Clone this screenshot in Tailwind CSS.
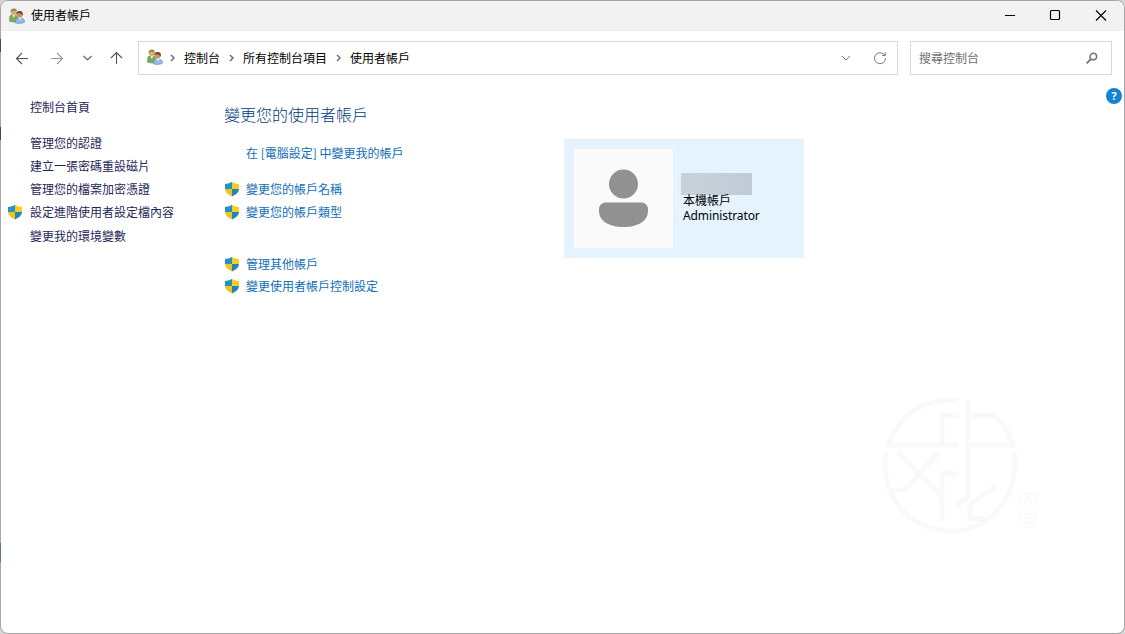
<!DOCTYPE html>
<html lang="zh-Hant">
<head>
  <meta charset="UTF-8" />
  <meta name="viewport" content="width=device-width, initial-scale=1.0"/>
  <title>使用者帳戶</title>
  <script src="https://cdn.jsdelivr.net/npm/@tailwindcss/browser@4"></script>
</head>
<body class="relative bg-[#d4d4d4] h-[634px] overflow-hidden font-['Noto_Sans_CJK_TC',sans-serif] text-[12px] leading-[16px] text-black">

  <!-- Shared icons -->
  <svg class="hidden">
    <symbol id="shield" viewBox="0 0 16 16">
      <path d="M8 .8C6 2.2 3.600 2.800 1 2.900V8h7z" fill="#2493c9"/>
      <path d="M8 .8c2 1.400 4.400 2 7 2.100V8H8z" fill="#f5cf1f"/>
      <path d="M1 8c.3 3.400 3.200 5.900 7 7.400V8z" fill="#edc51c"/>
      <path d="M15 8c-.3 3.400-3.200 5.900-7 7.400V8z" fill="#2583b5"/>
    </symbol>
    <symbol id="users" viewBox="0 0 16 16">
      <path d="M.6 13.300V9.500C.6 7.500 2 6.800 4.500 6.800s4 1 4 3v3.500c-2 .8-6 .8-7.900 0z" fill="#79ad5b" stroke="#4f8338" stroke-width=".5"/>
      <path d="M3.500 7l1.200 3L6.300 7z" fill="#e9f3e0"/>
      <circle cx="4.700" cy="4" r="2.900" fill="#d9ab7c"/>
      <path d="M1.600 4.300C1.300 1.700 2.700.5 4.800.5s3.300 1.100 3 3C6.500 2.600 4 2.500 2.700 3.200z" fill="#a38345"/>
      <path d="M6 14.600c0-3 1.400-4.700 4.700-4.700s5 1.500 5 4.200c-2 1.700-7.500 1.900-9.700.5z" fill="#8fb9e6" stroke="#4c7fb8" stroke-width=".5"/>
      <path d="M9.500 10l1.500 2.200 1.500-2.200z" fill="#eef6ff"/>
      <circle cx="10.500" cy="6.600" r="3" fill="#cf9065"/>
      <path d="M7.300 6.300C7 4.200 8.400 3 10.600 3c2.700 0 4 2 3.100 4.900-.6-1.900-3-2.900-5-2.500z" fill="#6b4c38"/>
    </symbol>
    <symbol id="crumb" viewBox="0 0 6 8">
      <path d="M1 1l3 3-3 3" fill="none" stroke="#666" stroke-width="1.400"/>
    </symbol>
  </svg>

  <div class="relative h-[634px] flex flex-col bg-white border border-[#a6a6a6] rounded-lg overflow-hidden">

    <!-- Title bar -->
    <header class="h-[30px] shrink-0 bg-[#f2f2f2] flex items-center pl-2">
      <svg class="size-4"><use href="#users"/></svg>
      <h1 class="ml-1.5 -mt-0.5">使用者帳戶</h1>
      <div class="ml-auto flex items-center h-full -mt-0.5">
        <svg class="w-[46px] h-[30px]" viewBox="0 0 46 30"><path d="M19 15.500h10" stroke="#000"/></svg>
        <svg class="w-[45px] h-[30px]" viewBox="0 0 45 30"><rect x="18.500" y="10.500" width="9" height="9" rx="1" fill="none" stroke="#000" stroke-width="1.200"/></svg>
        <svg class="w-[47px] h-[30px]" viewBox="0 0 47 30"><path d="M19 10.500l10 10m0-10l-10 10" stroke="#000" stroke-width="1.100"/></svg>
      </div>
    </header>

    <!-- Navigation -->
    <nav class="h-[54px] shrink-0 flex items-center pr-3">
      <div class="w-[137px] flex items-center pl-[14px]">
        <svg class="w-[14px] h-[14px]" viewBox="0 0 14 14" fill="none" stroke="#555" stroke-width="1.100"><path d="M13 7.500H1.500M7 2L1.500 7.500 7 13"/></svg>
        <svg class="w-[14px] h-[14px] ml-[21px]" viewBox="0 0 14 14" fill="none" stroke="#999" stroke-width="1.100"><path d="M1 7.500h11.500M7 2l5.500 5.500L7 13"/></svg>
        <svg class="w-[10px] h-[14px] ml-[18px]" viewBox="0 0 10 14" fill="none" stroke="#666" stroke-width="1.200"><path d="M1.500 5l4 4 4-4"/></svg>
        <svg class="w-[14px] h-[14px] ml-[17px]" viewBox="0 0 14 14" fill="none" stroke="#555" stroke-width="1.100"><path d="M7.500 13V1.500M2 7l5.500-5.500L13 7"/></svg>
      </div>
      <div class="w-[760px] h-[34px] border border-[#d9d9d9] flex items-center pl-2">
        <svg class="size-4 -mt-0.5"><use href="#users"/></svg>
        <svg class="w-1.5 h-2 ml-[7px]"><use href="#crumb"/></svg>
        <span class="ml-[8px] -mt-px">控制台</span>
        <svg class="w-1.5 h-2 ml-[9px]"><use href="#crumb"/></svg>
        <span class="ml-[8px] -mt-px">所有控制台項目</span>
        <svg class="w-1.5 h-2 ml-[9px]"><use href="#crumb"/></svg>
        <span class="ml-[8px] -mt-px">使用者帳戶</span>
        <svg class="w-[10px] h-[14px] ml-auto" viewBox="0 0 10 14" fill="none" stroke="#777"><path d="M1 5l4 4 4-4"/></svg>
        <svg class="w-[14px] h-[14px] ml-[22px] mr-[10px]" viewBox="0 0 14 14" fill="none" stroke="#777"><path d="M12.500 7.300A5.500 5.500 0 1 1 10.500 3L12 4.300M12.300 1.500V4.500H9.300"/></svg>
      </div>
      <div class="ml-3 w-[202px] h-[34px] border border-[#d9d9d9] flex items-center pl-2 pr-[13px] text-[#6e6e6e]">
        <span class="-mt-px">搜尋控制台</span>
        <svg class="size-3 ml-auto" viewBox="0 0 12 12" fill="none" stroke="#777"><circle cx="7.300" cy="4.600" r="3.300" stroke-width="1.600"/><path d="M5 7L.6 11.400" stroke-width="1.900"/></svg>
      </div>
    </nav>

    <main class="flex items-start">
      <!-- Sidebar -->
      <aside class="w-[223px] pt-[14px] pl-1.5 text-[#1f2757]">
        <a class="block pl-[23px] mb-5">控制台首頁</a>
        <ul>
          <li class="h-[23px] pl-[23px]">管理您的認證</li>
          <li class="h-[23px] pl-[23px]">建立一張密碼重設磁片</li>
          <li class="h-[23px] pl-[23px]">管理您的檔案加密憑證</li>
          <li class="h-6 flex items-start"><svg class="size-4 mr-[7px]"><use href="#shield"/></svg>設定進階使用者設定檔內容</li>
          <li class="pl-[23px]">變更我的環境變數</li>
        </ul>
      </aside>

      <!-- Account tasks -->
      <section class="w-[340px] pt-[17px] text-[#106eb5]">
        <h2 class="text-[16px] leading-6 font-light text-[#003a80] mb-[19px]">變更您的使用者帳戶</h2>
        <ul>
          <li class="h-9 pl-[22px]">在 [電腦設定] 中變更我的帳戶</li>
          <li class="h-[23px] flex items-start"><svg class="size-4 mr-1.5"><use href="#shield"/></svg>變更您的帳戶名稱</li>
          <li class="h-[52px] flex items-start"><svg class="size-4 mr-1.5"><use href="#shield"/></svg>變更您的帳戶類型</li>
          <li class="h-[22px] flex items-start"><svg class="size-4 mr-1.5"><use href="#shield"/></svg>管理其他帳戶</li>
          <li class="flex items-start"><svg class="size-4 mr-1.5"><use href="#shield"/></svg>變更使用者帳戶控制設定</li>
        </ul>
      </section>

      <!-- Account card -->
      <section class="mt-[54px] w-[240px] h-[119px] bg-[#e5f3ff] flex pl-[10px] pt-[10px]">
        <div class="size-[99px] bg-[#fafafa]">
          <svg class="size-[99px]" viewBox="0 0 99 99" fill="#919191"><circle cx="49.500" cy="35" r="14.500"/><path d="M31.500 53.500h36a6.500 6.500 0 0 1 6.500 6.500v2c0 10-10 16-24.500 16S25 72 25 62v-2a6.500 6.500 0 0 1 6.500-6.500z"/></svg>
        </div>
        <div class="ml-2 pt-[24px]">
          <div class="w-[71px] h-[22px] bg-linear-to-r from-[#c9d2da] to-[#c0ccd6]"></div>
          <p class="pl-0.5 -mt-[3px]">本機帳戶</p>
          <p class="pl-0.5 font-['Noto_Sans'] tracking-[-0.1px]">Administrator</p>
        </div>
      </section>

      <svg class="size-4 ml-auto mr-[2px] mt-[3px]" viewBox="0 0 16 16"><circle cx="8" cy="8" r="8" fill="#1583cf"/><text x="8" y="12" text-anchor="middle" font-size="11" font-weight="bold" font-family="Open Sans" fill="#fff">?</text></svg>
    </main>

    <!-- Watermark -->
    <svg class="absolute left-[860px] top-[384px] w-[200px] h-[160px]" viewBox="0 0 200 160" fill="none" stroke="#f9f9f9" stroke-width="5">
      <path d="M97 15.500C62 12 36 32 28 60h69M81 58V30.500h16M107 15v97l-12 10M110 30.500h22c10 7 16 16 20 29.500h-42"/>
      <path d="M25 67C18 107 46 146 90 146c40 0 69-36 63-79"/>
      <path d="M36 67l44 44M78 67l-34 38H30M81 136V88.500h16M135 100l-26 20v14h19"/>
      <g stroke="#fdf5f5" stroke-width="1"><path d="M160 109h14v33h-14zM163 119l4-7 4 7M163 123h8v6h-8zM163 133h8m-4 0v5m-4 0h8"/></g>
    </svg>
  </div>

  <!-- Desktop showing along the left edge -->
  <div class="absolute left-0 top-[39px] w-px h-[13px] bg-[#4a4a4a]"></div>
  <div class="absolute left-0 top-[127px] w-px h-[13px] bg-[#3d4a5c]"></div>
  <div class="absolute left-0 top-[543px] w-px h-[19px] bg-[#5f7880]"></div>

</body>
</html>
